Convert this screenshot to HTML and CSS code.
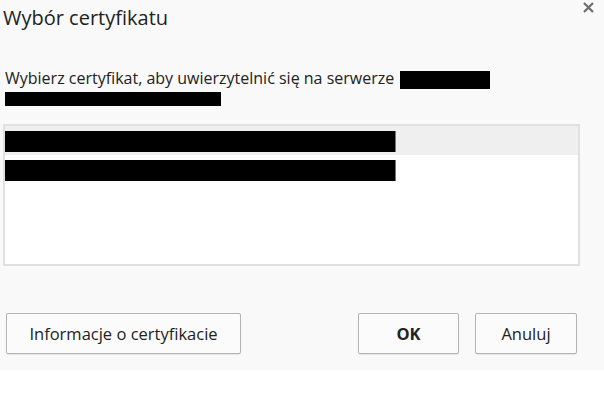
FILE: index.html
```html
<!DOCTYPE html>
<html lang="pl">
<head>
  <meta charset="UTF-8">
  <title>Wybór certyfikatu</title>
  <link rel="stylesheet" href="styles.css">
</head>
<body>
  <div class="dialog">
    <div class="dialog-header">
      <h1 class="title">Wybór certyfikatu</h1>
      <span class="close-btn">
        <svg width="11" height="11" viewBox="0 0 11 11">
          <path d="M1 1 L10 10 M10 1 L1 10" stroke="#6e6e6e" stroke-width="2.2" fill="none"/>
        </svg>
      </span>
    </div>

    <p class="message">
      Wybierz certyfikat, aby uwierzytelnić się na serwerze <span class="redact redact-host"></span><br>
      <span class="redact redact-port"></span>
    </p>

    <div class="cert-list">
      <div class="cert-row selected"><span class="redact redact-cert"></span></div>
      <div class="cert-row"><span class="redact redact-cert"></span></div>
    </div>

    <div class="buttons">
      <button class="btn btn-info">Informacje o certyfikacie</button>
      <div class="buttons-right">
        <button class="btn btn-ok">OK</button>
        <button class="btn btn-cancel">Anuluj</button>
      </div>
    </div>
  </div>
</body>
</html>
```

FILE: styles.css
```css
* {
    box-sizing: border-box;
}
body {
    margin: 0;
    background: #fff;
    font-family: "Open Sans", "Noto Sans", sans-serif;
    color: #222;
}
.dialog {
    height: 370px;
    padding: 0 24px 0 3px;
    background: #f9f9f9;
}
.dialog-header {
    display: flex;
    justify-content: space-between;
    align-items: flex-start;
}
.title {
    margin: 0;
    padding-top: 5px;
    font-size: 20px;
    font-weight: normal;
    line-height: 26px;
    color: #222;
}
.close-btn {
    margin: 2px -14px 0 0;
    width: 11px;
    height: 11px;
    display: flex;
}
.message {
    margin: 38px 0 0 2px;
    font-size: 16px;
    line-height: 19px;
    white-space: nowrap;
}
.redact {
    display: inline-block;
    background: #000;
    vertical-align: middle;
}
.redact-host {
    width: 90px;
    height: 18px;
    margin-left: 2px;
}
.redact-port {
    width: 216px;
    height: 14px;
}
.cert-list {
    width: 577px;
    height: 142px;
    margin-top: 16px;
    border: 2px solid #e0e0e0;
    background: #fff;
}
.cert-row {
    height: 29px;
    padding: 5px 0 0 0;
}
.cert-row.selected {
    background: #efefef;
}
.redact-cert {
    display: block;
    width: 391px;
    height: 21px;
    border-right: 1px solid #777;
}
.buttons {
    display: flex;
    justify-content: space-between;
    margin: 47px 0 0 3px;
    width: 571px;
}
.buttons-right {
    display: flex;
    gap: 16px;
}
.btn {
    height: 41px;
    border: 1px solid #b4b4b4;
    border-radius: 2px;
    background: #fbfbfb;
    box-shadow: 0 1px 1px rgba(0, 0, 0, 0.08);
    font-family: inherit;
    font-size: 16.5px;
    color: #222;
}
.btn-info {
    width: 235px;
}
.btn-ok {
    width: 101px;
    font-weight: bold;
}
.btn-cancel {
    width: 102px;
}
```
